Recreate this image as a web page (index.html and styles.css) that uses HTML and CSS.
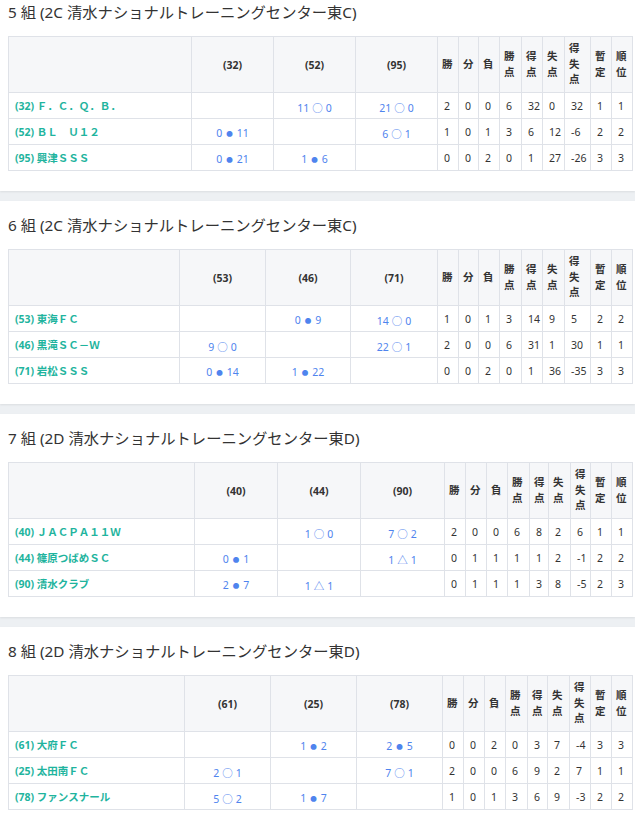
FILE: index.html
```html
<!DOCTYPE html>
<html lang="ja">
<head>
<meta charset="utf-8">
<title>リーグ表</title>
<link rel="stylesheet" href="styles.css">
</head>
<body>
<main class="page">

<section class="sec">
  <h2 class="ttl">5 組 (2C 清水ナショナルトレーニングセンター東C)</h2>
  <table class="lg lg5">
    <colgroup><col class="cn"><col class="cm1"><col class="cm2"><col class="cm3"><col class="s1"><col class="s2"><col class="s3"><col class="s4"><col class="s5"><col class="s6"><col class="s7"><col class="s8"><col class="s9"></colgroup>
    <thead><tr class="hr"><th></th><th class="mh">(32)</th><th class="mh">(52)</th><th class="mh">(95)</th><th class="sh">勝</th><th class="sh">分</th><th class="sh">負</th><th class="sh">勝<br>点</th><th class="sh">得<br>点</th><th class="sh">失<br>点</th><th class="sh">得<br>失<br>点</th><th class="sh">暫<br>定</th><th class="sh">順<br>位</th></tr></thead>
    <tbody>
      <tr class="r"><td class="tm">(32) Ｆ．Ｃ．Ｑ．Ｂ．</td><td class="sc"></td><td class="sc">11<span class="mk">○</span>0</td><td class="sc">21<span class="mk">○</span>0</td><td class="st">2</td><td class="st">0</td><td class="st">0</td><td class="st">6</td><td class="st">32</td><td class="st">0</td><td class="st">32</td><td class="st">1</td><td class="st">1</td></tr>
      <tr class="r"><td class="tm">(52) ＢＬ　Ｕ１２</td><td class="sc">0<span class="mk dot">●</span>11</td><td class="sc"></td><td class="sc">6<span class="mk">○</span>1</td><td class="st">1</td><td class="st">0</td><td class="st">1</td><td class="st">3</td><td class="st">6</td><td class="st">12</td><td class="st">-6</td><td class="st">2</td><td class="st">2</td></tr>
      <tr class="r"><td class="tm">(95) 興津ＳＳＳ</td><td class="sc">0<span class="mk dot">●</span>21</td><td class="sc">1<span class="mk dot">●</span>6</td><td class="sc"></td><td class="st">0</td><td class="st">0</td><td class="st">2</td><td class="st">0</td><td class="st">1</td><td class="st">27</td><td class="st">-26</td><td class="st">3</td><td class="st">3</td></tr>
    </tbody>
  </table>
</section>

<section class="sec">
  <h2 class="ttl">6 組 (2C 清水ナショナルトレーニングセンター東C)</h2>
  <table class="lg lg6">
    <colgroup><col class="cn"><col class="cm1"><col class="cm2"><col class="cm3"><col class="s1"><col class="s2"><col class="s3"><col class="s4"><col class="s5"><col class="s6"><col class="s7"><col class="s8"><col class="s9"></colgroup>
    <thead><tr class="hr"><th></th><th class="mh">(53)</th><th class="mh">(46)</th><th class="mh">(71)</th><th class="sh">勝</th><th class="sh">分</th><th class="sh">負</th><th class="sh">勝<br>点</th><th class="sh">得<br>点</th><th class="sh">失<br>点</th><th class="sh">得<br>失<br>点</th><th class="sh">暫<br>定</th><th class="sh">順<br>位</th></tr></thead>
    <tbody>
      <tr class="r"><td class="tm">(53) 東海ＦＣ</td><td class="sc"></td><td class="sc">0<span class="mk dot">●</span>9</td><td class="sc">14<span class="mk">○</span>0</td><td class="st">1</td><td class="st">0</td><td class="st">1</td><td class="st">3</td><td class="st">14</td><td class="st">9</td><td class="st">5</td><td class="st">2</td><td class="st">2</td></tr>
      <tr class="r"><td class="tm">(46) 黒滝ＳＣ－Ｗ</td><td class="sc">9<span class="mk">○</span>0</td><td class="sc"></td><td class="sc">22<span class="mk">○</span>1</td><td class="st">2</td><td class="st">0</td><td class="st">0</td><td class="st">6</td><td class="st">31</td><td class="st">1</td><td class="st">30</td><td class="st">1</td><td class="st">1</td></tr>
      <tr class="r"><td class="tm">(71) 岩松ＳＳＳ</td><td class="sc">0<span class="mk dot">●</span>14</td><td class="sc">1<span class="mk dot">●</span>22</td><td class="sc"></td><td class="st">0</td><td class="st">0</td><td class="st">2</td><td class="st">0</td><td class="st">1</td><td class="st">36</td><td class="st">-35</td><td class="st">3</td><td class="st">3</td></tr>
    </tbody>
  </table>
</section>

<section class="sec">
  <h2 class="ttl">7 組 (2D 清水ナショナルトレーニングセンター東D)</h2>
  <table class="lg lg7">
    <colgroup><col class="cn"><col class="cm1"><col class="cm2"><col class="cm3"><col class="s1"><col class="s2"><col class="s3"><col class="s4"><col class="s5"><col class="s6"><col class="s7"><col class="s8"><col class="s9"></colgroup>
    <thead><tr class="hr"><th></th><th class="mh">(40)</th><th class="mh">(44)</th><th class="mh">(90)</th><th class="sh">勝</th><th class="sh">分</th><th class="sh">負</th><th class="sh">勝<br>点</th><th class="sh">得<br>点</th><th class="sh">失<br>点</th><th class="sh">得<br>失<br>点</th><th class="sh">暫<br>定</th><th class="sh">順<br>位</th></tr></thead>
    <tbody>
      <tr class="r"><td class="tm">(40) ＪＡＣＰＡ１１Ｗ</td><td class="sc"></td><td class="sc">1<span class="mk">○</span>0</td><td class="sc">7<span class="mk">○</span>2</td><td class="st">2</td><td class="st">0</td><td class="st">0</td><td class="st">6</td><td class="st">8</td><td class="st">2</td><td class="st">6</td><td class="st">1</td><td class="st">1</td></tr>
      <tr class="r"><td class="tm">(44) 篠原つばめＳＣ</td><td class="sc">0<span class="mk dot">●</span>1</td><td class="sc"></td><td class="sc">1<span class="mk">△</span>1</td><td class="st">0</td><td class="st">1</td><td class="st">1</td><td class="st">1</td><td class="st">1</td><td class="st">2</td><td class="st">-1</td><td class="st">2</td><td class="st">2</td></tr>
      <tr class="r"><td class="tm">(90) 清水クラブ</td><td class="sc">2<span class="mk dot">●</span>7</td><td class="sc">1<span class="mk">△</span>1</td><td class="sc"></td><td class="st">0</td><td class="st">1</td><td class="st">1</td><td class="st">1</td><td class="st">3</td><td class="st">8</td><td class="st">-5</td><td class="st">2</td><td class="st">3</td></tr>
    </tbody>
  </table>
</section>

<section class="sec">
  <h2 class="ttl">8 組 (2D 清水ナショナルトレーニングセンター東D)</h2>
  <table class="lg lg8">
    <colgroup><col class="cn"><col class="cm1"><col class="cm2"><col class="cm3"><col class="s1"><col class="s2"><col class="s3"><col class="s4"><col class="s5"><col class="s6"><col class="s7"><col class="s8"><col class="s9"></colgroup>
    <thead><tr class="hr"><th></th><th class="mh">(61)</th><th class="mh">(25)</th><th class="mh">(78)</th><th class="sh">勝</th><th class="sh">分</th><th class="sh">負</th><th class="sh">勝<br>点</th><th class="sh">得<br>点</th><th class="sh">失<br>点</th><th class="sh">得<br>失<br>点</th><th class="sh">暫<br>定</th><th class="sh">順<br>位</th></tr></thead>
    <tbody>
      <tr class="r"><td class="tm">(61) 大府ＦＣ</td><td class="sc"></td><td class="sc">1<span class="mk dot">●</span>2</td><td class="sc">2<span class="mk dot">●</span>5</td><td class="st">0</td><td class="st">0</td><td class="st">2</td><td class="st">0</td><td class="st">3</td><td class="st">7</td><td class="st">-4</td><td class="st">3</td><td class="st">3</td></tr>
      <tr class="r"><td class="tm">(25) 太田南ＦＣ</td><td class="sc">2<span class="mk">○</span>1</td><td class="sc"></td><td class="sc">7<span class="mk">○</span>1</td><td class="st">2</td><td class="st">0</td><td class="st">0</td><td class="st">6</td><td class="st">9</td><td class="st">2</td><td class="st">7</td><td class="st">1</td><td class="st">1</td></tr>
      <tr class="r"><td class="tm">(78) ファンスナール</td><td class="sc">5<span class="mk">○</span>2</td><td class="sc">1<span class="mk dot">●</span>7</td><td class="sc"></td><td class="st">1</td><td class="st">0</td><td class="st">1</td><td class="st">3</td><td class="st">6</td><td class="st">9</td><td class="st">-3</td><td class="st">2</td><td class="st">2</td></tr>
    </tbody>
  </table>
</section>

</main>
</body>
</html>
```

FILE: styles.css
```css
* { box-sizing: border-box; }

html, body {
  margin: 0;
  padding: 0;
  background: #edf0f3;
  font-family: "Noto Sans", "Noto Sans CJK JP", sans-serif;
  color: #333;
}

.page {
  display: flex;
  flex-direction: column;
  gap: 10px;
}

.sec {
  background: #fff;
  padding: 14px 3px 20px 8px;
  box-shadow: 0 1px 2px rgba(0, 0, 0, 0.08);
}

.sec:first-child {
  padding-top: 2px;
}

.ttl {
  margin: 0 0 14px;
  font-size: 15.3px;
  line-height: 20px;
  font-weight: 400;
  color: #333;
  white-space: nowrap;
}

.lg {
  width: 100%;
  table-layout: fixed;
  border-collapse: collapse;
  font-size: 10.5px;
}

.lg th,
.lg td {
  border: 1px solid #dfe2e8;
  padding: 0;
}

.hr { height: 56px; }
.r { height: 26px; }

.lg th {
  background: #f6f7f9;
  font-weight: 700;
  color: #333;
  vertical-align: middle;
}

.mh { text-align: center; }

.sh {
  text-align: left;
  padding: 0 4px !important;
  line-height: 15.5px;
}

.tm {
  color: #1fb49e;
  font-weight: 700;
  padding: 0 6px !important;
  white-space: nowrap;
  overflow: hidden;
  line-height: 14px;
  vertical-align: middle;
}

.sc {
  color: #4f84ee;
  text-align: center;
  vertical-align: middle;
  padding-top: 3px !important;
  white-space: nowrap;
}

.mk {
  display: inline-block;
  margin: 0 3px;
}

.dot {
  font-size: 6.5px;
  vertical-align: 1px;
  margin: 0 4px;
}

.st {
  padding: 0 5px 0 6px !important;
  color: #333;
  white-space: nowrap;
  vertical-align: middle;
}

/* column widths, group 5 */
.lg5 .cn { width: 183px; }
.lg5 .cm1, .lg5 .cm2, .lg5 .cm3 { width: 82px; }
.lg5 .s1 { width: 21px; } .lg5 .s2 { width: 20px; } .lg5 .s3 { width: 21px; }
.lg5 .s4 { width: 22px; } .lg5 .s5 { width: 21px; } .lg5 .s6 { width: 22px; }
.lg5 .s7 { width: 26px; } .lg5 .s8 { width: 21px; } .lg5 .s9 { width: 21px; }

/* group 6 */
.lg6 .cn { width: 171px; }
.lg6 .cm1 { width: 86px; } .lg6 .cm2 { width: 85px; } .lg6 .cm3 { width: 87px; }
.lg6 .s1 { width: 21px; } .lg6 .s2 { width: 20px; } .lg6 .s3 { width: 21px; }
.lg6 .s4 { width: 22px; } .lg6 .s5 { width: 21px; } .lg6 .s6 { width: 22px; }
.lg6 .s7 { width: 26px; } .lg6 .s8 { width: 21px; } .lg6 .s9 { width: 21px; }

/* group 7 */
.lg7 .cn { width: 186px; }
.lg7 .cm1, .lg7 .cm2 { width: 83px; } .lg7 .cm3 { width: 84px; }
.lg7 .s1, .lg7 .s2, .lg7 .s3 { width: 21px; }
.lg7 .s4 { width: 22px; } .lg7 .s5 { width: 19px; } .lg7 .s6 { width: 22px; }
.lg7 .s7 { width: 20px; } .lg7 .s8 { width: 21px; } .lg7 .s9 { width: 21px; }

/* group 8 */
.lg8 .cn { width: 176px; }
.lg8 .cm1, .lg8 .cm2, .lg8 .cm3 { width: 86px; }
.lg8 .s1, .lg8 .s2, .lg8 .s3 { width: 21px; }
.lg8 .s4 { width: 22px; } .lg8 .s5 { width: 20px; } .lg8 .s6 { width: 22px; }
.lg8 .s7 { width: 21px; } .lg8 .s8 { width: 21px; } .lg8 .s9 { width: 21px; }
```
